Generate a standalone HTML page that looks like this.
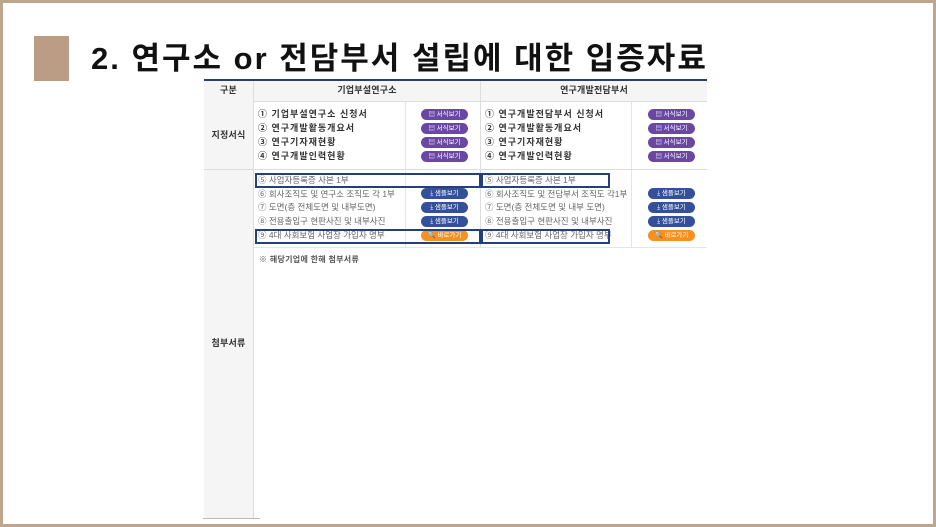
<!DOCTYPE html>
<html><head><meta charset="utf-8"><style>
body{margin:0;width:936px;height:527px;overflow:hidden;background:#fff;font-family:"Liberation Sans","Noto Sans CJK KR",sans-serif;position:relative}
.frame{position:absolute;left:0;top:0;width:930px;height:521px;border:3px solid #bea58d}
.a{position:absolute}
.t{position:absolute;font-size:8.5px;color:#333;white-space:nowrap;line-height:11px}
.k{font-weight:bold;font-size:9px;letter-spacing:1px}
.h{font-weight:bold;font-size:9px;letter-spacing:0.2px}
.b{position:absolute;width:47px;height:11px;border-radius:6px;color:#fff;font-size:6.5px;line-height:11px;text-align:center}
.p{background:#6a47a3}.bl{background:#34509a}.o{background:#f7901e}
.box{position:absolute;border:2px solid #253f78;box-sizing:border-box}
</style></head><body>
<div class="frame"></div>
<div class="a" style="left:34px;top:36px;width:35px;height:45px;background:#bb9d85"></div>
<div class="a" style="left:91px;top:39px;font-size:31px;line-height:40px;font-weight:bold;color:#111;white-space:nowrap;letter-spacing:2px">2. 연구소 or 전담부서 설립에 대한 입증자료</div>

<div class="a" style="left:204px;top:79px;width:503px;height:2px;background:#2c3e6b"></div>
<div class="a" style="left:204px;top:81px;width:503px;height:20px;background:#f5f5f5;border-bottom:1px solid #ddd"></div>
<div class="a" style="left:204px;top:101px;width:49px;height:417px;background:#f5f5f5"></div>
<div class="a" style="left:253px;top:81px;width:1px;height:437px;background:#ddd"></div>
<div class="a" style="left:480px;top:81px;width:1px;height:166px;background:#ddd"></div>
<div class="a" style="left:405px;top:101px;width:1px;height:146px;background:#e5e5e5"></div>
<div class="a" style="left:631px;top:101px;width:1px;height:146px;background:#e5e5e5"></div>
<div class="a" style="left:204px;top:169px;width:503px;height:1px;background:#ddd"></div>
<div class="a" style="left:253px;top:247px;width:454px;height:1px;background:#e5e5e5"></div>
<div class="a" style="left:203px;top:518px;width:57px;height:1px;background:#bbb"></div>

<div class="t h" style="left:204px;width:49px;text-align:center;top:85px">구분</div>
<div class="t h" style="left:254px;width:226px;text-align:center;top:85px">기업부설연구소</div>
<div class="t h" style="left:481px;width:226px;text-align:center;top:85px">연구개발전담부서</div>
<div class="t h" style="left:204px;width:49px;text-align:center;top:130px">지정서식</div>
<div class="t h" style="left:204px;width:49px;text-align:center;top:338px">첨부서류</div>

<div class="t k" style="left:258px;top:109px">① 기업부설연구소 신청서</div>
<div class="t k" style="left:258px;top:123px">② 연구개발활동개요서</div>
<div class="t k" style="left:258px;top:137px">③ 연구기자재현황</div>
<div class="t k" style="left:258px;top:151px">④ 연구개발인력현황</div>
<div class="t k" style="left:485px;top:109px">① 연구개발전담부서 신청서</div>
<div class="t k" style="left:485px;top:123px">② 연구개발활동개요서</div>
<div class="t k" style="left:485px;top:137px">③ 연구기자재현황</div>
<div class="t k" style="left:485px;top:151px">④ 연구개발인력현황</div>

<div class="b p" style="left:421px;top:109px">▤ 서식보기</div>
<div class="b p" style="left:421px;top:123px">▤ 서식보기</div>
<div class="b p" style="left:421px;top:137px">▤ 서식보기</div>
<div class="b p" style="left:421px;top:151px">▤ 서식보기</div>
<div class="b p" style="left:648px;top:109px">▤ 서식보기</div>
<div class="b p" style="left:648px;top:123px">▤ 서식보기</div>
<div class="b p" style="left:648px;top:137px">▤ 서식보기</div>
<div class="b p" style="left:648px;top:151px">▤ 서식보기</div>

<div class="t" style="left:258px;top:175px;color:#666">⑤ 사업자등록증 사본 1부</div>
<div class="t" style="left:258px;top:189px;color:#666">⑥ 회사조직도 및 연구소 조직도 각 1부</div>
<div class="t" style="left:258px;top:202px;color:#666">⑦ 도면(층 전체도면 및 내부도면)</div>
<div class="t" style="left:258px;top:216px;color:#666">⑧ 전용출입구 현판사진 및 내부사진</div>
<div class="t" style="left:258px;top:230px;color:#666">⑨ 4대 사회보험 사업장 가입자 명부</div>
<div class="t" style="left:485px;top:175px;color:#666">⑤ 사업자등록증 사본 1부</div>
<div class="t" style="left:485px;top:189px;color:#666">⑥ 회사조직도 및 전담부서 조직도 각1부</div>
<div class="t" style="left:485px;top:202px;color:#666">⑦ 도면(층 전체도면 및 내부 도면)</div>
<div class="t" style="left:485px;top:216px;color:#666">⑧ 전용출입구 현판사진 및 내부사진</div>
<div class="t" style="left:485px;top:230px;color:#666">⑨ 4대 사회보험 사업장 가입자 명부</div>

<div class="b bl" style="left:421px;top:188px">⤓ 샘플보기</div>
<div class="b bl" style="left:421px;top:202px">⤓ 샘플보기</div>
<div class="b bl" style="left:421px;top:216px">⤓ 샘플보기</div>
<div class="b o" style="left:421px;top:230px">🔍 바로가기</div>
<div class="b bl" style="left:648px;top:188px">⤓ 샘플보기</div>
<div class="b bl" style="left:648px;top:202px">⤓ 샘플보기</div>
<div class="b bl" style="left:648px;top:216px">⤓ 샘플보기</div>
<div class="b o" style="left:648px;top:230px">🔍 바로가기</div>

<div class="box" style="left:255px;top:173px;width:226px;height:15px"></div>
<div class="box" style="left:481px;top:173px;width:129px;height:15px"></div>
<div class="box" style="left:255px;top:229px;width:226px;height:15px"></div>
<div class="box" style="left:481px;top:229px;width:129px;height:15px"></div>

<div class="t" style="left:259px;top:254px;color:#555;font-weight:bold;font-size:8px;letter-spacing:0.3px">※ 해당기업에 한해 첨부서류</div>
</body></html>
